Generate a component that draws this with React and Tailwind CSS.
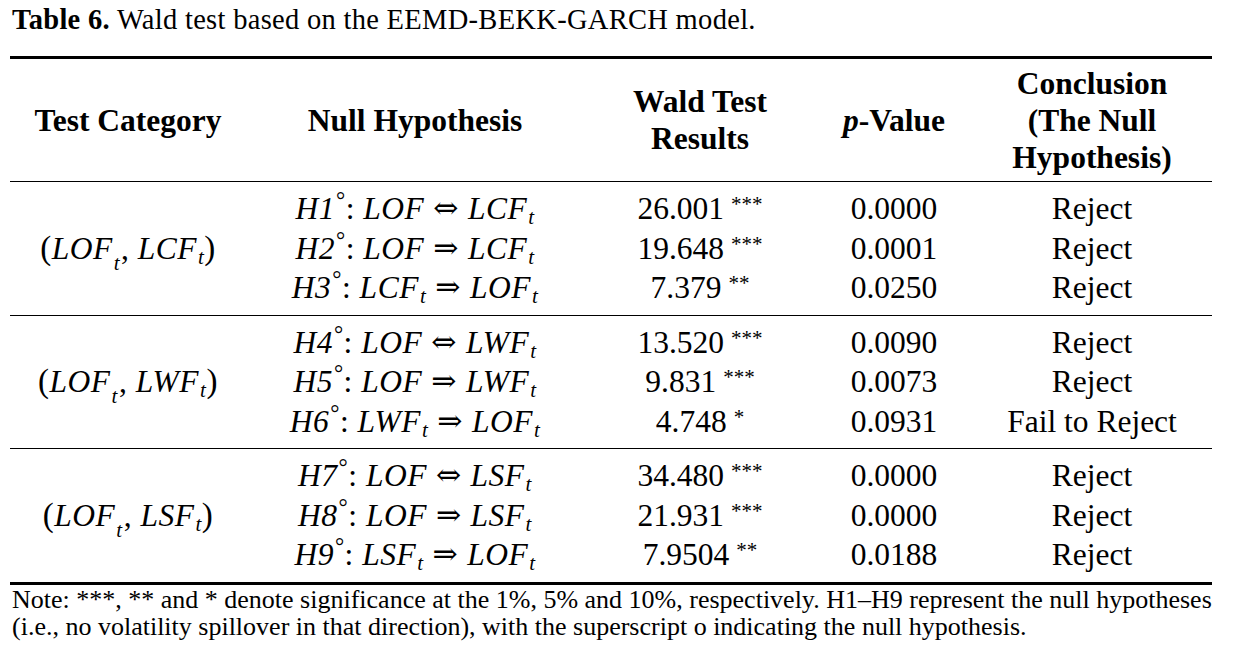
import React from 'react';

const cols = 'grid grid-cols-[236px_338px_232px_156px_240px]';

const groups = [
  {
    cat: 'LCF',
    rows: [
      { n: '1', a: ['LOF'], op: '⇔', b: ['LCF', 't'], wald: '26.001', stars: '***', p: '0.0000', c: 'Reject' },
      { n: '2', a: ['LOF'], op: '⇒', b: ['LCF', 't'], wald: '19.648', stars: '***', p: '0.0001', c: 'Reject' },
      { n: '3', a: ['LCF', 't'], op: '⇒', b: ['LOF', 't'], wald: '7.379', stars: '**', p: '0.0250', c: 'Reject' },
    ],
  },
  {
    cat: 'LWF',
    rows: [
      { n: '4', a: ['LOF'], op: '⇔', b: ['LWF', 't'], wald: '13.520', stars: '***', p: '0.0090', c: 'Reject' },
      { n: '5', a: ['LOF'], op: '⇒', b: ['LWF', 't'], wald: '9.831', stars: '***', p: '0.0073', c: 'Reject' },
      { n: '6', a: ['LWF', 't'], op: '⇒', b: ['LOF', 't'], wald: '4.748', stars: '*', p: '0.0931', c: 'Fail to Reject' },
    ],
  },
  {
    cat: 'LSF',
    rows: [
      { n: '7', a: ['LOF'], op: '⇔', b: ['LSF', 't'], wald: '34.480', stars: '***', p: '0.0000', c: 'Reject' },
      { n: '8', a: ['LOF'], op: '⇒', b: ['LSF', 't'], wald: '21.931', stars: '***', p: '0.0000', c: 'Reject' },
      { n: '9', a: ['LSF', 't'], op: '⇒', b: ['LOF', 't'], wald: '7.9504', stars: '**', p: '0.0188', c: 'Reject' },
    ],
  },
];

const Var = ({ v }) => (
  <span className="italic">
    {v[0]}
    {v[1] && <sub className="text-[21px] ml-[1px]">{v[1]}</sub>}
  </span>
);

const Hypo = ({ r }) => (
  <span className="whitespace-nowrap tracking-[0.5px]">
    <span className="italic">H{r.n}</span>
    <span className="relative -top-[11px] text-[23px] ml-[1px]">°</span>
    <span>: </span>
    <Var v={r.a} />
    <span className="font-['DejaVu_Serif'] font-light text-[30px] mx-[9px] relative -top-[1px]">{r.op}</span>
    <Var v={r.b} />
  </span>
);

const Category = ({ name }) => (
  <span className="whitespace-nowrap tracking-[0.5px]">
    <span className="text-[33px]">(</span>
    <span className="italic">LOF</span>
    <sub className="italic text-[21px] -bottom-[11px] mx-[1px]">t</sub>
    <span>, </span>
    <span className="italic">{name}</span>
    <sub className="italic text-[21px] ml-[1px]">t</sub>
    <span className="text-[33px]">)</span>
  </span>
);

export default function App() {
  return (
    <div className="w-[1237px] h-[656px] bg-white text-black font-['Liberation_Serif','DejaVu_Serif',serif]">
      <div className="pl-[12px] pt-[4px] text-[28.5px] leading-[32px] tracking-[0.3px]">
        <span className="font-bold">Table 6.</span> Wald test based on the EEMD-BEKK-GARCH model.
      </div>

      <div className="ml-[10px] w-[1202px] mt-[20px]">
        <div className={`${cols} h-[126px] border-t-[3px] border-b border-black font-bold text-[31.5px] leading-[37px] text-center items-center`}>
          <div>Test Category</div>
          <div>Null Hypothesis</div>
          <div>
            Wald Test
            <br />
            Results
          </div>
          <div>
            <span className="italic">p</span>-Value
          </div>
          <div>
            Conclusion
            <br />
            (The Null
            <br />
            Hypothesis)
          </div>
        </div>

        {groups.map((g, gi) => (
          <div
            key={gi}
            className={`${cols} py-[7px] text-[31.5px] text-center ${gi < groups.length - 1 ? 'border-b border-black' : 'border-b-[3px] border-black'}`}
          >
            <div className="row-span-3 flex items-center justify-center">
              <Category name={g.cat} />
            </div>
            {g.rows.map((r, ri) => (
              <React.Fragment key={ri}>
                <div className={`h-[39.5px] flex items-center justify-center ${ri > 0 ? 'col-start-2' : ''}`}>
                  <Hypo r={r} />
                </div>
                <div className="h-[39.5px] flex items-center justify-center">
                  <span>
                    {r.wald}
                    <span className="relative -top-[8px] text-[21px] ml-[7px]">{r.stars}</span>
                  </span>
                </div>
                <div className="h-[39.5px] flex items-center justify-center">{r.p}</div>
                <div className="h-[39.5px] flex items-center justify-center">{r.c}</div>
              </React.Fragment>
            ))}
          </div>
        ))}

        <div className="pl-[2px] pt-[1px] text-[26px] leading-[27px] whitespace-nowrap">
          Note: ***, ** and * denote significance at the 1%, 5% and 10%, respectively. H1–H9 represent the null hypotheses
          <br />
          (i.e., no volatility spillover in that direction), with the superscript o indicating the null hypothesis.
        </div>
      </div>
    </div>
  );
}
